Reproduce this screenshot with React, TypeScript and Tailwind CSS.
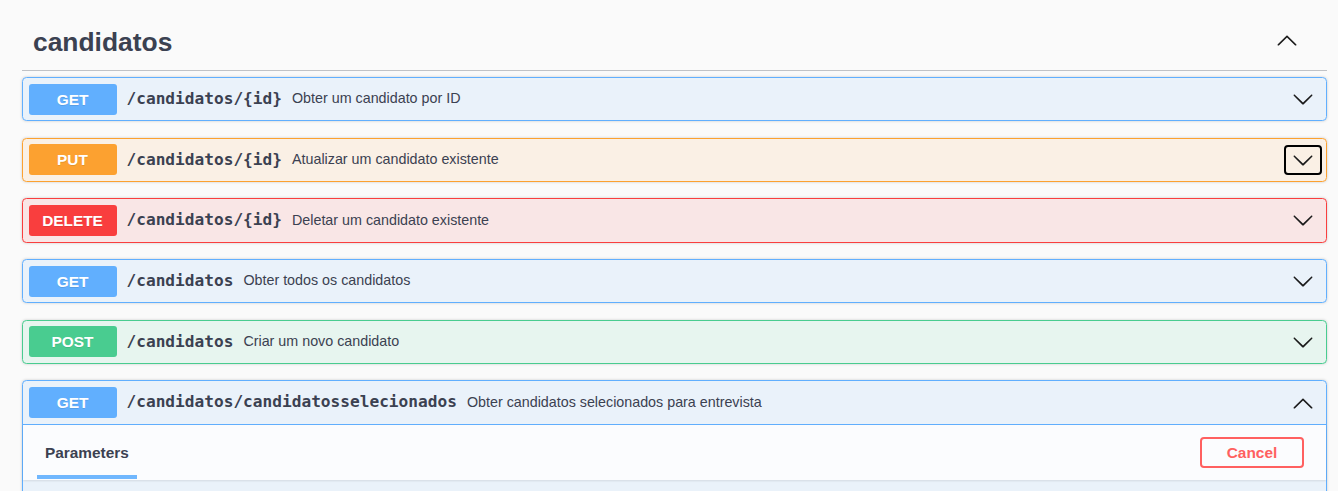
import React from 'react';

type Method = 'GET' | 'PUT' | 'DELETE' | 'POST';

interface Op {
  method: Method;
  path: string;
  summary: string;
  focused?: boolean;
}

const methodStyles: Record<Method, { badge: string; block: string }> = {
  GET: { badge: 'bg-[#61affe]', block: 'border-[#61affe] bg-[#61affe]/10' },
  PUT: { badge: 'bg-[#fca130]', block: 'border-[#fca130] bg-[#fca130]/10' },
  DELETE: { badge: 'bg-[#f93e3e]', block: 'border-[#f93e3e] bg-[#f93e3e]/10' },
  POST: { badge: 'bg-[#49cc90]', block: 'border-[#49cc90] bg-[#49cc90]/10' },
};

const ops: Op[] = [
  { method: 'GET', path: '/candidatos/{id}', summary: 'Obter um candidato por ID' },
  { method: 'PUT', path: '/candidatos/{id}', summary: 'Atualizar um candidato existente', focused: true },
  { method: 'DELETE', path: '/candidatos/{id}', summary: 'Deletar um candidato existente' },
  { method: 'GET', path: '/candidatos', summary: 'Obter todos os candidatos' },
  { method: 'POST', path: '/candidatos', summary: 'Criar um novo candidato' },
];

const sans = { fontFamily: '"Liberation Sans", Arial, sans-serif' };
const mono = { fontFamily: '"DejaVu Sans Mono", "Liberation Mono", monospace' };

const ArrowDown = () => (
  <svg width="22" height="22" viewBox="0 0 20 20" fill="#1b1b1b">
    <path d="M17.418 6.109c.272-.268.709-.268.979 0s.271.701 0 .969l-7.908 7.83c-.27.268-.707.268-.979 0l-7.908-7.83c-.27-.268-.27-.701 0-.969.271-.268.709-.268.979 0L10 13.25l7.418-7.141z" />
  </svg>
);

const ArrowUp = () => (
  <svg width="22" height="22" viewBox="0 0 20 20" fill="#1b1b1b">
    <path d="M17.418 14.908c.272.268.709.268.979 0s.271-.701 0-.969l-7.908-7.83c-.27-.268-.707-.268-.979 0l-7.908 7.83c-.27.268-.27.701 0 .969.271.268.709.268.979 0L10 7.767l7.418 7.141z" />
  </svg>
);

const Summary = ({ op, open }: { op: Op; open?: boolean }) => (
  <div className="flex items-center h-[42.2px] pl-[5.5px] pr-[4px]">
    <span
      className={`flex items-center justify-center w-[88px] h-[31px] rounded-[3px] text-white font-bold text-[15.4px] [text-shadow:0_1px_0_rgba(0,0,0,0.1)] ${methodStyles[op.method].badge}`}
      style={sans}
    >
      {op.method}
    </span>
    <span className="pl-[10px] pr-[10px] text-[16.15px] font-bold text-[#3b4151]" style={mono}>
      {op.path}
    </span>
    <span className="flex-1 text-[14.3px] text-[#3b4151]" style={sans}>
      {op.summary}
    </span>
    <button
      className={`flex items-center justify-center h-[30px] px-[6px] rounded-[4px] border-2 ${
        op.focused ? 'border-black' : 'border-transparent'
      }`}
    >
      {open ? <ArrowUp /> : <ArrowDown />}
    </button>
  </div>
);

export default function App() {
  return (
    <div className="h-[491px] overflow-hidden bg-[#fafafa] pl-[22px] pr-[11px]" style={sans}>
      <div className="flex items-center justify-between h-[71px] pt-[25px] pb-[15px] pl-[11px] pr-[29px] border-b border-[#3b4151]/30">
        <h3 className="mt-[6px] text-[26.4px] font-bold text-[#3b4151]">candidatos</h3>
        <ArrowUp />
      </div>

      <div className="mt-[6px]">
        {ops.map((op, i) => (
          <div
            key={i}
            className={`mb-[16.5px] border rounded-[4.4px] shadow-[0_0_3px_rgba(0,0,0,0.19)] ${methodStyles[op.method].block}`}
          >
            <Summary op={op} />
          </div>
        ))}

        <div className={`border rounded-[4.4px] shadow-[0_0_3px_rgba(0,0,0,0.19)] ${methodStyles.GET.block}`}>
          <div className="border-b border-[#61affe]">
            <Summary
              op={{
                method: 'GET',
                path: '/candidatos/candidatosselecionados',
                summary: 'Obter candidatos selecionados para entrevista',
              }}
              open
            />
          </div>
          <div className="flex items-center justify-between h-[55px] px-[22px] bg-white/80 shadow-[0_1px_2px_rgba(0,0,0,0.1)]">
            <h4 className="relative text-[15.4px] font-bold text-[#3b4151]">
              Parameters
              <span className="absolute -left-[10%] w-[120%] h-[4px] -bottom-[15.5px] bg-[#61affe]/90" />
            </h4>
            <button className="w-[104px] h-[31px] rounded-[4px] border-2 border-[#ff6060] text-[#ff6060] text-[15.4px] font-bold">
              Cancel
            </button>
          </div>
          <div className="h-[40px]" />
        </div>
      </div>
    </div>
  );
}
